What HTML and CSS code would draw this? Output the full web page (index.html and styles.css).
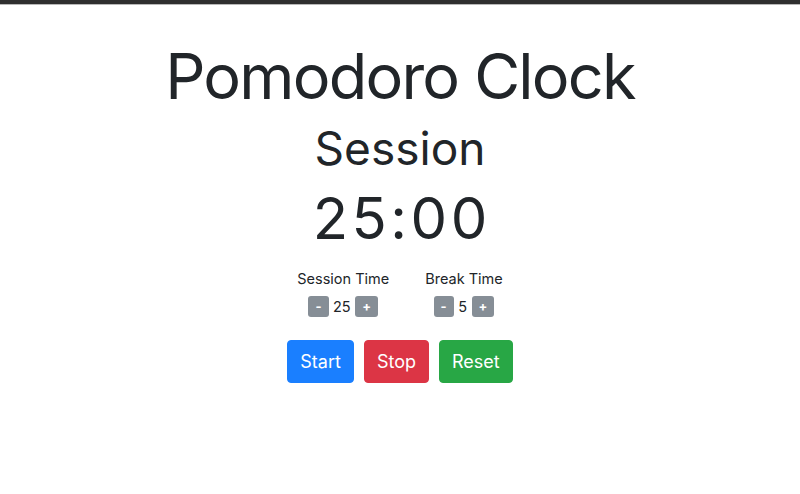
FILE: index.html
```html
<!DOCTYPE html>
<html>
<head>
<meta charset="utf-8">
<link rel="stylesheet" href="styles.css">
</head>
<body>
<div class="topbar"></div>
<main class="clock">
  <h1 class="title">Pomodoro Clock</h1>
  <h2 class="mode">Session</h2>
  <div class="timer">25:00</div>
  <div class="settings">
    <div class="setting">
      <div class="label">Session Time</div>
      <div class="adjust">
        <button class="mini">-</button>
        <span class="value">25</span>
        <button class="mini">+</button>
      </div>
    </div>
    <div class="setting">
      <div class="label">Break Time</div>
      <div class="adjust">
        <button class="mini">-</button>
        <span class="value">5</span>
        <button class="mini">+</button>
      </div>
    </div>
  </div>
  <div class="actions">
    <button class="btn btn-start">Start</button>
    <button class="btn btn-stop">Stop</button>
    <button class="btn btn-reset">Reset</button>
  </div>
</main>
</body>
</html>
```
FILE: styles.css
```css
html, body {
  margin: 0;
  padding: 0;
  background: #fff;
}
body {
  font-family: Inter, "Noto Sans", sans-serif;
  color: #212529;
}
.topbar {
  height: 4px;
  background: #2f2f2f;
  border-bottom: 1px solid #b8b8b8;
}
.clock {
  display: flex;
  flex-direction: column;
  align-items: center;
  text-align: center;
}
.title {
  margin: 34px 0 0;
  font-size: 63px;
  font-weight: 400;
  line-height: 1.2;
  letter-spacing: -1.8px;
}
.mode {
  margin: 6px 0 0;
  font-size: 46px;
  font-weight: 400;
  line-height: 1.2;
}
.timer {
  margin-top: 8px;
  font-size: 58px;
  line-height: 1.2;
  letter-spacing: 3.5px;
  padding-left: 3.5px;
}
.settings {
  display: flex;
  gap: 36px;
  margin-top: 16px;
}
.setting {
  display: flex;
  flex-direction: column;
  align-items: center;
}
.label {
  font-size: 14.5px;
  line-height: 20px;
}
.adjust {
  display: flex;
  align-items: center;
  gap: 4.5px;
  margin-top: 7px;
}
.mini {
  height: 21px;
  padding: 0 7px;
  border: none;
  border-radius: 3px;
  background: #868e96;
  color: #fff;
  font-family: inherit;
  font-weight: 700;
  font-size: 13px;
  line-height: 21px;
}
.value {
  font-size: 14.5px;
}
.actions {
  display: flex;
  gap: 10px;
  margin-top: 23px;
}
.btn {
  height: 43px;
  padding: 0 12px;
  border: 1px solid transparent;
  border-radius: 4px;
  color: #fff;
  font-family: inherit;
  font-size: 18px;
  line-height: 41px;
}
.btn-start { background: #1a7fff; border-color: #1a7fff; }
.btn-stop { background: #dc3545; border-color: #dc3545; }
.btn-reset { background: #28a745; border-color: #28a745; }
```
